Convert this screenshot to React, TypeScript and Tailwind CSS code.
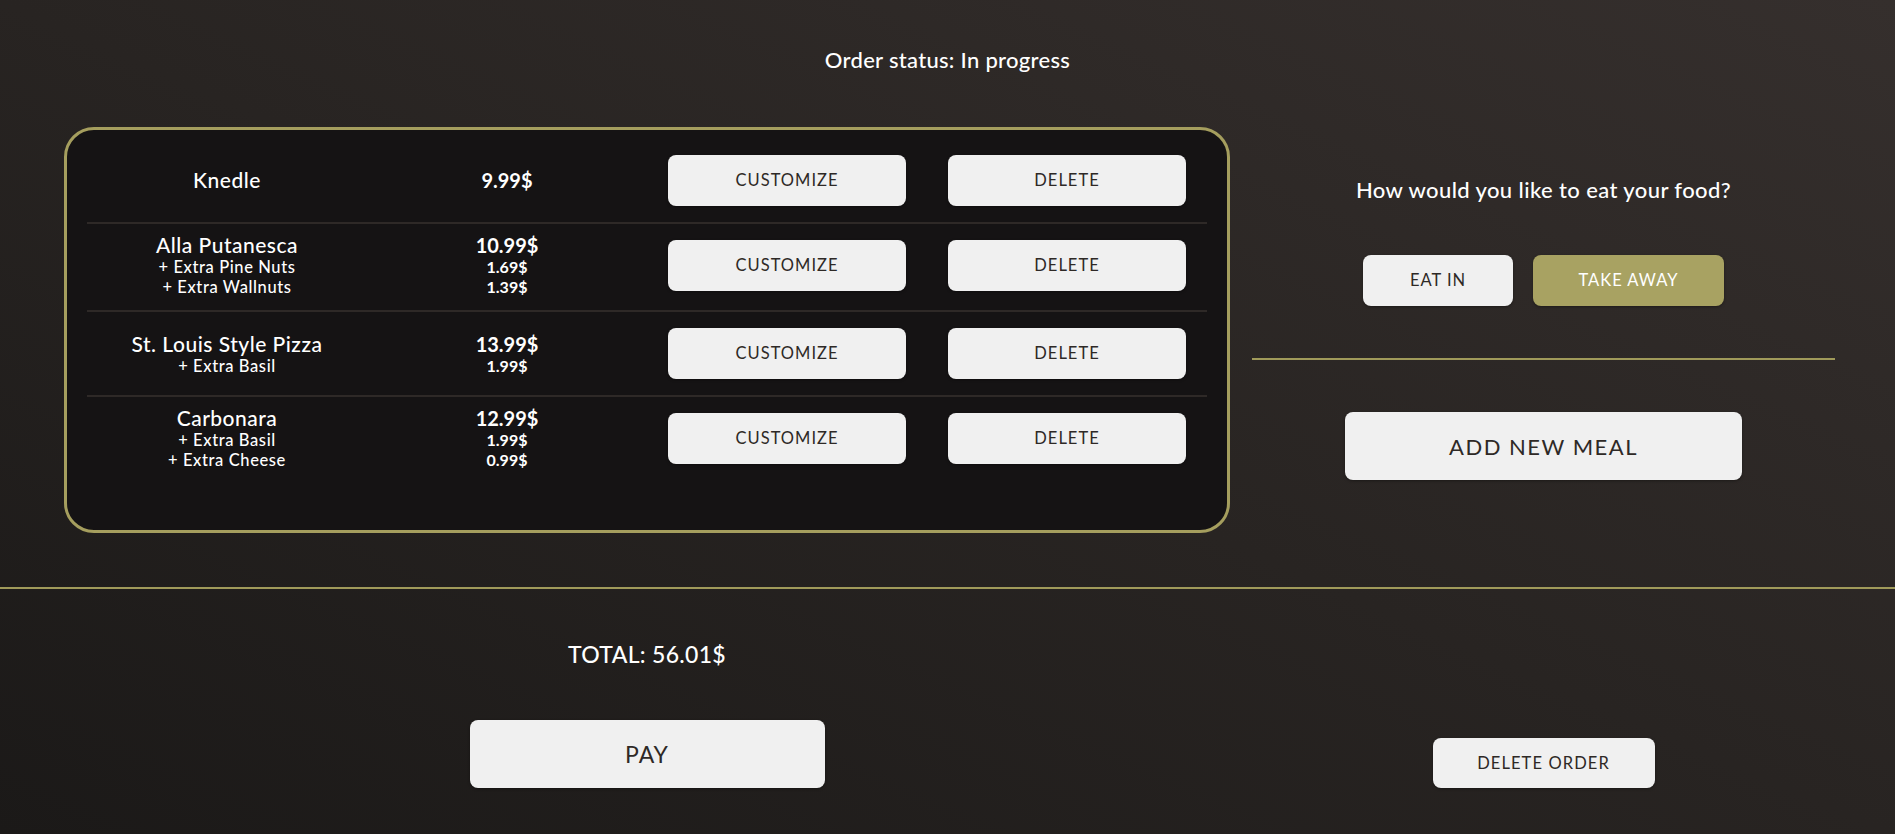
import React from "react";

type Extra = { name: string; price: string };
type Item = { name: string; price: string; extras: Extra[]; rowClass: string };

const items: Item[] = [
  { name: "Knedle", price: "9.99$", extras: [], rowClass: "h-[86px] border-b-2 border-[#2e2927]" },
  {
    name: "Alla Putanesca",
    price: "10.99$",
    extras: [
      { name: "+ Extra Pine Nuts", price: "1.69$" },
      { name: "+ Extra Wallnuts", price: "1.39$" },
    ],
    rowClass: "h-[88px] pb-[4px] border-b-2 border-[#2e2927]",
  },
  {
    name: "St. Louis Style Pizza",
    price: "13.99$",
    extras: [{ name: "+ Extra Basil", price: "1.99$" }],
    rowClass: "h-[85px] border-b-2 border-[#2e2927]",
  },
  {
    name: "Carbonara",
    price: "12.99$",
    extras: [
      { name: "+ Extra Basil", price: "1.99$" },
      { name: "+ Extra Cheese", price: "0.99$" },
    ],
    rowClass: "h-[82px]",
  },
];

const btn =
  "bg-[#f0f0f0] text-[#2e2926] rounded-[8px] shadow-[0_1px_3px_rgba(0,0,0,0.35)] flex items-center justify-center uppercase";

export default function App() {
  return (
    <div
      className="w-full h-[834px] overflow-hidden bg-gradient-to-bl from-[#352f2d] via-[#282422] to-[#1b1918] text-white"
      style={{ fontFamily: "Lato, 'Open Sans', sans-serif" }}
    >
      <div className="pt-[48px] text-center text-[22px] leading-[24px] tracking-[0.3px] font-medium">
        Order status: In progress
      </div>

      <div className="mt-[55px] pl-[64px] pr-[60px] grid grid-cols-[2fr_1fr] gap-[22px]">
        <div className="h-[406px] rounded-[30px] border-[3px] border-[#a59e5e] bg-[#151314] pt-[8px] px-[20px]">
          {items.map((it, i) => (
            <div key={i} className={"grid grid-cols-4 items-center " + it.rowClass}>
              <div className="flex flex-col items-center">
                <div className="text-[21px] leading-[24px] tracking-[0.5px] font-medium">{it.name}</div>
                {it.extras.map((e, j) => (
                  <div key={j} className="text-[16.5px] leading-[20px] tracking-[0.6px] font-medium">
                    {e.name}
                  </div>
                ))}
              </div>
              <div className="flex flex-col items-center">
                <div className="text-[20px] leading-[24px] font-bold">{it.price}</div>
                {it.extras.map((e, j) => (
                  <div key={j} className="text-[16px] leading-[20px] font-bold">
                    {e.price}
                  </div>
                ))}
              </div>
              <div className="flex justify-center">
                <button className={btn + " w-[238px] h-[51px] text-[16.5px] tracking-[1px]"}>Customize</button>
              </div>
              <div className="flex justify-center">
                <button className={btn + " w-[238px] h-[51px] text-[16.5px] tracking-[1px]"}>Delete</button>
              </div>
            </div>
          ))}
        </div>

        <div className="flex flex-col items-center pt-[50px]">
          <div className="text-[22px] leading-[26px] tracking-[0.4px] font-medium">
            How would you like to eat your food?
          </div>
          <div className="mt-[52px] flex gap-[20px]">
            <button className={btn + " w-[150px] h-[51px] text-[16.5px] tracking-[1px]"}>Eat in</button>
            <button className="w-[191px] h-[51px] rounded-[8px] bg-[#a8a262] text-white text-[16.5px] tracking-[1px] uppercase flex items-center justify-center shadow-[0_1px_3px_rgba(0,0,0,0.35)]">
              Take away
            </button>
          </div>
          <div className="mt-[52px] w-full h-[2px] bg-[#a09a5a]" />
          <button className={btn + " mt-[52px] w-[397px] h-[68px] text-[22px] tracking-[1.5px]"}>Add new meal</button>
        </div>
      </div>

      <div className="mt-[54px] h-[2px] w-full bg-[#a09a5a]" />

      <div className="pl-[64px] pr-[60px] grid grid-cols-[2fr_1fr] gap-[22px]">
        <div className="flex flex-col items-center pt-[51px]">
          <div className="text-[23px] leading-[28px] tracking-[0.3px] font-medium">TOTAL: 56.01$</div>
          <button className={btn + " mt-[52px] w-[355px] h-[68px] text-[23px] tracking-[1px]"}>Pay</button>
        </div>
        <div className="flex items-end justify-center">
          <button className={btn + " w-[222px] h-[50px] text-[16.5px] tracking-[1.1px]"}>Delete order</button>
        </div>
      </div>
    </div>
  );
}
